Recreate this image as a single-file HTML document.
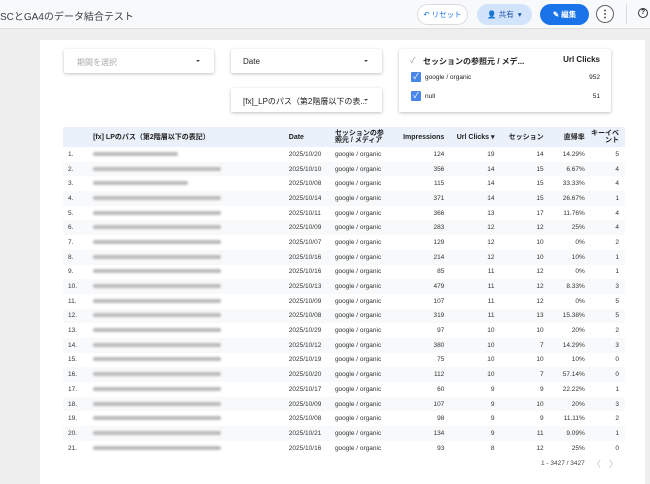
<!DOCTYPE html><html><head><meta charset="utf-8"><style>
*{box-sizing:border-box;margin:0;padding:0}
body{width:650px;height:484px;overflow:hidden;background:#eeeeee;font-family:"Liberation Sans","Noto Sans CJK JP",sans-serif;color:#202124;position:relative}
.hdr{position:absolute;left:0;top:0;width:650px;height:29px;background:#f8f9fa;border-bottom:1px solid #e0e0e0}
.title{position:absolute;left:0;top:8px;font-size:10px;color:#3c4043}
.btn{position:absolute;top:4px;height:21px;border-radius:11px;font-size:7.5px;display:flex;align-items:center;justify-content:center;white-space:nowrap}
.card{position:absolute;left:40px;top:40px;width:605px;height:444px;background:#fff}
.box{position:absolute;background:#fff;border-radius:2px;box-shadow:0 1px 3px rgba(0,0,0,.25);font-size:8px;white-space:nowrap;overflow:hidden}
.arr{position:absolute;right:14px;top:50%;margin-top:-1px;border-left:2px solid transparent;border-right:2px solid transparent;border-top:2px solid #444}
.cb{position:absolute;left:12px;width:10px;height:10px;background:#4a86e8;border-radius:1px;color:#fff;font-size:8px;line-height:10px;text-align:center}
table{position:absolute;left:63px;top:127px;width:562px;border-collapse:collapse;font-size:6.5px;color:#333}
th{background:#eaf1fb;height:20px;font-size:7px;font-weight:bold;color:#222;line-height:7px}
td{height:14.7px}
tr:nth-child(even) td{background:#f8f9fa}
.r{text-align:right}
.blur{display:inline-block;height:4px;background:#bbb;border-radius:2px;filter:blur(1px)}
</style></head><body>
<div class="hdr">
<div class="title">SCとGA4のデータ結合テスト</div>
<div class="btn" style="left:417px;width:51px;border:1px solid #dadce0;background:#fff;color:#1a73e8">↶ リセット</div>
<div class="btn" style="left:477px;width:55px;background:#d2e3fc;color:#174ea6">👤 共有 &nbsp;▾</div>
<div class="btn" style="left:540px;width:49px;background:#1a73e8;color:#fff;font-weight:bold">✎ 編集</div>
<div class="btn" style="left:596px;width:18px;height:18px;top:5px;border:1px solid #5f6368;background:#fff;font-weight:bold;font-size:10px">⋮</div>
<div style="position:absolute;left:626px;top:4px;width:1px;height:20px;background:#dadce0"></div>
<div style="position:absolute;left:638px;top:8px;width:10px;height:10px;border:1.5px solid #333;border-radius:50%;font-size:7px;text-align:center;line-height:8px;font-weight:bold">?</div>
</div>
<div class="card"></div>
<div class="box" style="left:64px;top:49px;width:150px;height:24px"><span style="position:absolute;left:13px;top:8px;color:#aaa">期間を選択</span><div class="arr"></div></div>
<div class="box" style="left:231px;top:49px;width:151px;height:24px"><span style="position:absolute;left:12px;top:8px">Date</span><div class="arr"></div></div>
<div class="box" style="left:231px;top:88px;width:151px;height:24px"><span style="position:absolute;left:12px;top:8px">[fx]_LPのパス（第2階層以下の表...</span><div class="arr"></div></div>
<div class="box" style="left:399px;top:49px;width:212px;height:63px">
<span style="position:absolute;left:11px;top:6px;color:#999">✓</span>
<span style="position:absolute;left:24px;top:7px;font-weight:bold">セッションの参照元 / メデ...</span>
<span style="position:absolute;right:11px;top:6px;font-weight:bold">Url Clicks</span>
<div class="cb" style="top:23px">✓</div><span style="position:absolute;left:26px;top:25px;font-size:6.5px">google / organic</span><span style="position:absolute;right:11px;top:25px;font-size:6.5px">952</span>
<div class="cb" style="top:42px">✓</div><span style="position:absolute;left:26px;top:44px;font-size:6.5px">null</span><span style="position:absolute;right:11px;top:44px;font-size:6.5px">51</span>
</div>
<table>
<tr><th style="width:30px"></th><th style="width:195px;text-align:left">[fx] LPのパス（第2階層以下の表記）</th><th style="width:46px;text-align:left">Date</th><th style="width:58px;text-align:left">セッションの参<br>照元 / メディア</th><th class="r" style="width:51px">Impressions</th><th class="r" style="width:50px">Url Clicks ▾</th><th class="r" style="width:49px">セッション</th><th class="r" style="width:41px">直帰率</th><th class="r" style="width:40px;padding-right:6px">キーイベ<br>ント</th></tr>
<tbody id="tb"></tbody>
</table>
<div style="position:absolute;left:541px;top:460px;font-size:6.5px;color:#444">1 - 3427 / 3427</div>
<div style="position:absolute;left:592px;top:457px;font-size:9px;color:#bbb">〈</div>
<div style="position:absolute;left:609px;top:457px;font-size:9px;color:#bbb">〉</div>
<script>
var d=[["2025/10/20",124,19,14,"14.29%",5,85],["2025/10/10",356,14,15,"6.67%",4,128],["2025/10/08",115,14,15,"33.33%",4,95],["2025/10/14",371,14,15,"26.67%",1,128],["2025/10/11",366,13,17,"11.76%",4,128],["2025/10/09",283,12,12,"25%",4,128],["2025/10/07",129,12,10,"0%",2,128],["2025/10/16",214,12,10,"10%",1,128],["2025/10/16",85,11,12,"0%",1,128],["2025/10/13",479,11,12,"8.33%",3,128],["2025/10/09",107,11,12,"0%",5,128],["2025/10/08",319,11,13,"15.38%",5,128],["2025/10/29",97,10,10,"20%",2,128],["2025/10/12",380,10,7,"14.29%",3,128],["2025/10/19",75,10,10,"10%",0,128],["2025/10/20",112,10,7,"57.14%",0,128],["2025/10/17",60,9,9,"22.22%",1,128],["2025/10/09",107,9,10,"20%",3,128],["2025/10/08",98,9,9,"11.11%",2,128],["2025/10/21",134,9,11,"9.09%",1,128],["2025/10/16",93,8,12,"25%",0,128]];
var h="";d.forEach(function(r,i){h+='<tr><td style="padding-left:5px">'+(i+1)+'.</td><td><span class="blur" style="width:'+r[6]+'px"></span></td><td>'+r[0]+'</td><td>google / organic</td><td class="r">'+r[1]+'</td><td class="r">'+r[2]+'</td><td class="r">'+r[3]+'</td><td class="r">'+r[4]+'</td><td class="r" style="padding-right:6px">'+r[5]+'</td></tr>'});document.getElementById("tb").innerHTML=h;
</script>
</body></html>
